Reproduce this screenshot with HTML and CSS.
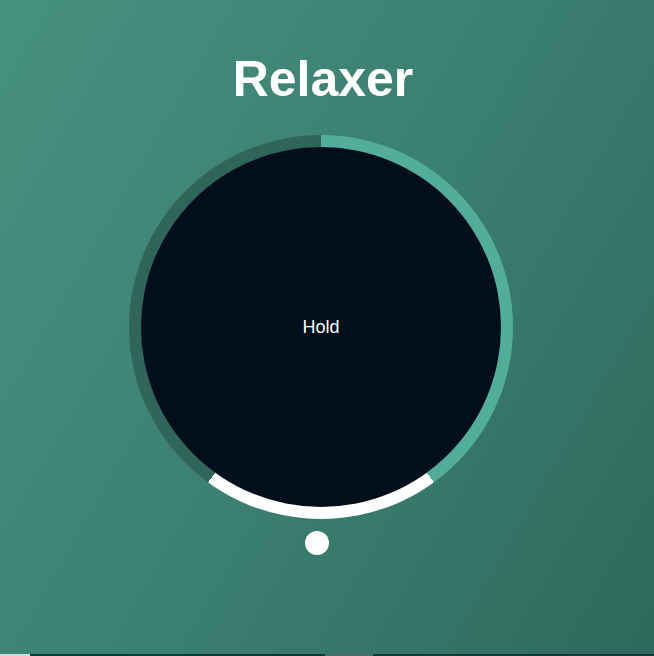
FILE: index.html
```html
<!DOCTYPE html>
<html>
<head>
<meta charset="utf-8">
<link rel="stylesheet" href="styles.css">
</head>
<body>
<main class="app">
  <h1 class="title">Relaxer</h1>
  <div class="ring">
    <div class="face"><span class="label">Hold</span></div>
  </div>
  <div class="dot"></div>
</main>
<div class="strip"><span class="seg-a"></span><span class="seg-b"></span></div>
</body>
</html>
```
FILE: styles.css
```css
html, body {
  margin: 0;
  padding: 0;
}
body {
  width: 654px;
  height: 656px;
  overflow: hidden;
  background: linear-gradient(120deg, #47917f 0%, #3b8072 50%, #2e695b 100%);
  font-family: "Liberation Sans", Arial, sans-serif;
  color: #fff;
}
.app {
  height: 654px;
  display: flex;
  flex-direction: column;
  align-items: center;
  padding-right: 12px;
  box-sizing: border-box;
}
.title {
  margin: 51px 0 0 0;
  font-size: 50px;
  font-weight: 700;
  line-height: 57px;
  margin-left: 4px;
}
.ring {
  margin-top: 27px;
  width: 384px;
  height: 384px;
  border-radius: 50%;
  background: conic-gradient(#52ae9b 0deg 144deg, #ffffff 144deg 216deg, #2f6659 216deg 360deg);
  display: flex;
  align-items: center;
  justify-content: center;
}
.face {
  width: 360px;
  height: 360px;
  border-radius: 50%;
  background: #010f1c;
  display: flex;
  align-items: center;
  justify-content: center;
}
.label {
  font-size: 18px;
  line-height: 20px;
}
.dot {
  margin-top: 12px;
  margin-right: 8px;
  width: 24px;
  height: 24px;
  border-radius: 50%;
  background: #fff;
}
.strip {
  height: 2px;
  background: #0f3a3a;
  display: flex;
}
.seg-a {
  width: 30px;
  background: #d0dcda;
}
.seg-b {
  width: 48px;
  margin-left: 295px;
  background: #4d6e6c;
}
```
